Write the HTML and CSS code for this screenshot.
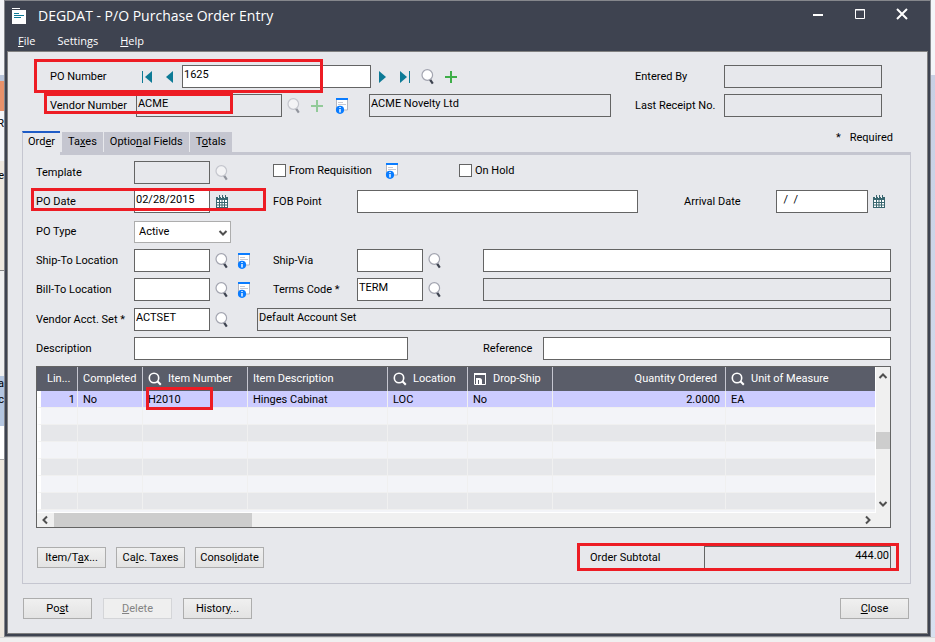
FILE: index.html
```html
<!DOCTYPE html>
<html lang="en">
<head>
    <meta charset="UTF-8">
    <meta name="viewport" content="width=device-width, initial-scale=1.0">
    <title>DEGDAT - P/O Purchase Order Entry</title>
    <link rel="stylesheet" href="styles.css">
</head>
<body>
    <!-- shared icons -->
    <svg class="defs" width="0" height="0" aria-hidden="true">
        <symbol id="i-search" viewBox="0 0 14 16">
            <path d="M8.6 10l3.2 4.6" stroke="#3e4350" stroke-width="2.2" fill="none"/>
            <circle cx="6.3" cy="6" r="5.3" fill="#fff" stroke="#a3a5b0" stroke-width="1.2"/>
        </symbol>
        <symbol id="i-plus" viewBox="0 0 14 14">
            <path d="M6 1v12M0 7h12" stroke="#3fae49" stroke-width="2" fill="none"/>
        </symbol>
        <symbol id="i-doc" viewBox="0 0 14 16">
            <path d="M1.5 2v10h11V2" fill="#fff" stroke="#b4b6c0"/>
            <path d="M1 0h12v2H1z" fill="#0a7cff"/>
            <path d="M3 4.5h5M3 6.5h8" stroke="#c8c9d2" fill="none"/>
            <circle cx="5" cy="11.8" r="4.1" fill="#0a7cff"/>
            <path d="M5 9v1M5 11v3.4" stroke="#fff" stroke-width="1.4" fill="none"/>
        </symbol>
        <symbol id="i-cal" viewBox="0 0 14 14">
            <path d="M1 2h12v11H1z" fill="#39666f"/>
            <path d="M2 5h10v7H2z" fill="#fff"/>
            <path d="M2 7.500h10M2 10h10M4.500 5v7M7 5v7M9.500 5v7" stroke="#39666f" fill="none"/>
            <path d="M4.500 0v2M7.500 0v2M10.500 0v2" stroke="#39666f" fill="none"/>
            <path d="M3 2.500h1M6 2.500h1M9 2.500h1" stroke="#fff" fill="none"/>
        </symbol>
        <symbol id="i-find" viewBox="0 0 14 14">
            <circle cx="6" cy="6" r="4.7" fill="none" stroke="#fff" stroke-width="1.6"/>
            <path d="M9.4 9.2l3.4 3.6" stroke="#fff" stroke-width="2" fill="none"/>
        </symbol>
        <symbol id="i-arrow" viewBox="0 0 10 10">
            <path d="M1.5 3l3.5 3.5L8.5 3" fill="none" stroke="#505050" stroke-width="2"/>
        </symbol>
    </svg>

    <div class="desktop">
        <div class="behind-left" aria-hidden="true">
            <div class="strip strip-top"></div>
            <div class="strip strip-bar"></div>
            <div class="strip strip-orange"></div>
            <div class="strip strip-text">R</div>
            <div class="strip strip-beige">e</div>
            <div class="strip strip-grey"></div>
            <div class="strip strip-blue">a<br>c</div>
            <div class="strip strip-white"></div>
            <div class="strip strip-rest"></div>
        </div>

        <main class="window">
            <header class="titlebar">
                <svg class="app-icon" width="14" height="16" viewBox="0 0 14 16">
                    <path d="M0 2h14v14H0z" fill="#fff"/>
                    <path d="M0 0h8v1H0z" fill="#fff"/>
                    <path d="M2 5.500h5M2 7.500h10M2 9.500h7" stroke="#0d7a96" stroke-width="1.2" fill="none"/>
                </svg>
                <h1>DEGDAT - P/O Purchase Order Entry</h1>
                <div class="window-buttons">
                    <button type="button" aria-label="Minimize"><svg width="12" height="12"><path d="M1 7h10" stroke="#fff" stroke-width="2"/></svg></button>
                    <button type="button" aria-label="Maximize"><svg width="12" height="12"><path d="M1.5 1.5h9v9h-9zM1 2h10" fill="none" stroke="#fff"/></svg></button>
                    <button type="button" aria-label="Close window"><svg width="12" height="12"><path d="M1 1l10 10M11 1L1 11" stroke="#fff" stroke-width="2"/></svg></button>
                </div>
            </header>
            <nav class="menu">
                <button type="button"><u>F</u>ile</button>
                <button type="button">Settings</button>
                <button type="button"><u>H</u>elp</button>
            </nav>

            <form class="client">
                <section class="head">
                    <div class="group">
                        <div class="row marked">
                            <label class="head-label" for="po">PO Number</label>
                            <div class="nav-buttons">
                                <button class="icon" type="button" aria-label="First"><svg width="12" height="12"><path d="M1.5 0v12" stroke="#0d7a96"/><path d="M11 0v12L4 6z" fill="#0d7a96"/></svg></button>
                                <button class="icon" type="button" aria-label="Previous"><svg width="12" height="12"><path d="M9 0v12L2 6z" fill="#0d7a96"/></svg></button>
                            </div>
                            <input class="po" id="po" type="text" value="1625">
                            <div class="next-buttons">
                                <button class="icon" type="button" aria-label="Next"><svg width="12" height="12"><path d="M2 0v12l7-6z" fill="#0d7a96"/></svg></button>
                                <button class="icon" type="button" aria-label="Last"><svg width="12" height="12"><path d="M1 0v12l7-6z" fill="#0d7a96"/><path d="M10.5 0v12" stroke="#0d7a96"/></svg></button>
                                <button class="icon" type="button" aria-label="Find order"><svg width="14" height="16"><use href="#i-search"/></svg></button>
                                <button class="icon" type="button" aria-label="New order"><svg width="14" height="14"><use href="#i-plus"/></svg></button>
                            </div>
                            <span class="mark mark-po"></span>
                        </div>
                        <div class="row marked">
                            <label class="head-label" for="vendor">Vendor Number</label>
                            <input class="vendor" id="vendor" type="text" value="ACME" readonly>
                            <div class="vendor-buttons">
                                <button class="icon" type="button" aria-label="Find vendor" disabled><svg width="14" height="16"><use href="#i-search"/></svg></button>
                                <button class="icon" type="button" aria-label="New vendor" disabled><svg width="14" height="14"><use href="#i-plus"/></svg></button>
                                <button class="icon" type="button" aria-label="Vendor details"><svg width="14" height="16"><use href="#i-doc"/></svg></button>
                            </div>
                            <input class="vendor-name" type="text" value="ACME Novelty Ltd" aria-label="Vendor name" readonly>
                            <span class="mark mark-vendor"></span>
                        </div>
                    </div>
                    <div class="group head-right">
                        <div class="row">
                            <label class="right-label" for="entered">Entered By</label>
                            <input class="right-field" id="entered" type="text" readonly>
                        </div>
                        <div class="row">
                            <label class="right-label" for="receipt">Last Receipt No.</label>
                            <input class="right-field" id="receipt" type="text" readonly>
                        </div>
                    </div>
                </section>

                <div class="tabs">
                    <button class="tab active" type="button">Ord<u>e</u>r</button>
                    <button class="tab" type="button">Ta<u>x</u>es</button>
                    <button class="tab" type="button">Optio<u>n</u>al Fields</button>
                    <button class="tab" type="button">T<u>o</u>tals</button>
                    <span class="required"><span>*</span>Required</span>
                </div>

                <section class="panel">
                    <div class="group">
                        <div class="row">
                            <div class="cell-a">
                                <label for="template">Template</label>
                                <input class="short" id="template" type="text" readonly>
                                <button class="icon" type="button" aria-label="Find template" disabled><svg width="14" height="16"><use href="#i-search"/></svg></button>
                            </div>
                            <div class="checks">
                                <label class="check"><input type="checkbox">From Requisition</label>
                                <button class="icon" type="button" aria-label="Requisition details"><svg width="14" height="16"><use href="#i-doc"/></svg></button>
                                <label class="check hold"><input type="checkbox">On Hold</label>
                            </div>
                        </div>
                        <div class="row marked">
                            <div class="cell-a">
                                <label for="podate">PO Date</label>
                                <input class="short" id="podate" type="text" value="02/28/2015">
                                <button class="icon" type="button" aria-label="Pick PO date"><svg width="14" height="14"><use href="#i-cal"/></svg></button>
                            </div>
                            <label class="label-b" for="fob">FOB Point</label>
                            <input class="fob" id="fob" type="text">
                            <div class="arrival">
                                <label for="arrival">Arrival Date</label>
                                <input id="arrival" type="text" value="  /  /">
                                <button class="icon" type="button" aria-label="Pick arrival date"><svg width="14" height="14"><use href="#i-cal"/></svg></button>
                            </div>
                            <span class="mark mark-date"></span>
                        </div>
                    </div>
                    <div class="group">
                        <div class="row">
                            <div class="cell-a">
                                <label for="potype">PO Type</label>
                                <div class="select">
                                    <select id="potype"><option>Active</option><option>Standing</option><option>Future</option><option>Blanket</option></select>
                                    <svg width="10" height="10"><use href="#i-arrow"/></svg>
                                </div>
                            </div>
                        </div>
                        <div class="row">
                            <div class="cell-a">
                                <label for="shipto">Ship-To Location</label>
                                <input class="short" id="shipto" type="text">
                                <button class="icon" type="button" aria-label="Find ship-to location"><svg width="14" height="16"><use href="#i-search"/></svg></button>
                                <button class="icon" type="button" aria-label="Ship-to details"><svg width="14" height="16"><use href="#i-doc"/></svg></button>
                            </div>
                            <label class="label-b" for="shipvia">Ship-Via</label>
                            <div class="cell-b">
                                <input id="shipvia" type="text">
                                <button class="icon" type="button" aria-label="Find ship-via"><svg width="14" height="16"><use href="#i-search"/></svg></button>
                            </div>
                            <input class="fill" type="text" aria-label="Ship-via description">
                        </div>
                        <div class="row">
                            <div class="cell-a">
                                <label for="billto">Bill-To Location</label>
                                <input class="short" id="billto" type="text">
                                <button class="icon" type="button" aria-label="Find bill-to location"><svg width="14" height="16"><use href="#i-search"/></svg></button>
                                <button class="icon" type="button" aria-label="Bill-to details"><svg width="14" height="16"><use href="#i-doc"/></svg></button>
                            </div>
                            <label class="label-b" for="terms">Terms Code *</label>
                            <div class="cell-b">
                                <input id="terms" type="text" value="TERM">
                                <button class="icon" type="button" aria-label="Find terms code"><svg width="14" height="16"><use href="#i-search"/></svg></button>
                            </div>
                            <input class="fill" type="text" aria-label="Terms description" readonly>
                        </div>
                    </div>
                    <div class="group">
                        <div class="row">
                            <div class="cell-a acct">
                                <label for="acctset">Vendor Acct. Set *</label>
                                <input class="short" id="acctset" type="text" value="ACTSET">
                                <button class="icon" type="button" aria-label="Find account set"><svg width="14" height="16"><use href="#i-search"/></svg></button>
                            </div>
                            <input class="fill" type="text" value="Default Account Set" aria-label="Account set description" readonly>
                        </div>
                        <div class="row">
                            <div class="desc">
                                <label for="desc">Description</label>
                                <input id="desc" type="text">
                            </div>
                            <label class="label-ref" for="ref">Reference</label>
                            <input class="fill" id="ref" type="text">
                        </div>
                    </div>

                    <div class="grid">
                        <div class="table-wrap">
                            <table>
                                <colgroup>
                                    <col class="c-line"><col class="c-completed"><col class="c-item"><col class="c-desc">
                                    <col class="c-location"><col class="c-drop"><col class="c-qty"><col>
                                </colgroup>
                                <thead>
                                    <tr>
                                        <th class="line">Lin...</th>
                                        <th>Completed</th>
                                        <th><svg width="14" height="14"><use href="#i-find"/></svg>Item Number</th>
                                        <th>Item Description</th>
                                        <th><svg width="14" height="14"><use href="#i-find"/></svg>Location</th>
                                        <th><svg width="14" height="14" viewBox="0 0 14 14"><path d="M1.5 3v9.5h11V3" fill="none" stroke="#fff"/><path d="M1 1h12v2H1z" fill="#fff"/><path d="M3 6h3.5a2.500 2.500 0 0 1 2.500 2.500V13H3z" fill="#fff"/><path d="M5.5 8v4" stroke="#5a5d69"/></svg>Drop-Ship</th>
                                        <th class="num">Quantity Ordered</th>
                                        <th><svg width="14" height="14"><use href="#i-find"/></svg>Unit of Measure</th>
                                    </tr>
                                </thead>
                                <tbody>
                                    <tr class="selected">
                                        <td class="num">1</td>
                                        <td>No</td>
                                        <td class="marked">H2010<span class="mark mark-item"></span></td>
                                        <td>Hinges Cabinat</td>
                                        <td>LOC</td>
                                        <td>No</td>
                                        <td class="num">2.0000</td>
                                        <td>EA</td>
                                    </tr>
                                    <tr><td></td><td></td><td></td><td></td><td></td><td></td><td></td><td></td></tr>
                                    <tr><td></td><td></td><td></td><td></td><td></td><td></td><td></td><td></td></tr>
                                    <tr><td></td><td></td><td></td><td></td><td></td><td></td><td></td><td></td></tr>
                                    <tr><td></td><td></td><td></td><td></td><td></td><td></td><td></td><td></td></tr>
                                    <tr><td></td><td></td><td></td><td></td><td></td><td></td><td></td><td></td></tr>
                                    <tr><td></td><td></td><td></td><td></td><td></td><td></td><td></td><td></td></tr>
                                </tbody>
                            </table>
                        </div>
                        <div class="vscroll">
                            <svg class="up" width="10" height="10"><use href="#i-arrow"/></svg>
                            <div class="thumb"></div>
                            <svg width="10" height="10"><use href="#i-arrow"/></svg>
                        </div>
                        <div class="hscroll">
                            <svg class="left" width="10" height="10"><use href="#i-arrow"/></svg>
                            <div class="thumb"></div>
                            <svg class="right" width="10" height="10"><use href="#i-arrow"/></svg>
                        </div>
                    </div>

                    <div class="panel-foot marked">
                        <button class="btn" type="button">Item/T<u>a</u>x...</button>
                        <button class="btn" type="button">Ca<u>l</u>c. Taxes</button>
                        <button class="btn" type="button">Consol<u>i</u>date</button>
                        <label for="subtotal">Order Subtotal</label>
                        <input id="subtotal" type="text" value="444.00" readonly>
                        <span class="mark mark-total"></span>
                    </div>
                </section>

                <footer class="actions">
                    <button class="btn" type="button">Po<u>s</u>t</button>
                    <button class="btn" type="button" disabled><u>D</u>elete</button>
                    <button class="btn" type="button">Histor<u>y</u>...</button>
                    <button class="btn close" type="button"><u>C</u>lose</button>
                </footer>
            </form>
        </main>

        <div class="behind-right" aria-hidden="true"></div>
    </div>
</body>
</html>
```
FILE: styles.css
```css
* {
    box-sizing: border-box;
}
body {
    margin: 0;
    background-color: #f0f0f0;
    color: #000;
    font-family: Roboto, sans-serif;
    font-size: 11px;
    line-height: 16px;
}
button, input, select {
    font: inherit;
    color: inherit;
    margin: 0;
}
label {
    white-space: nowrap;
}
.defs {
    position: absolute;
}
u {
    text-underline-offset: 1px;
}

/* desktop behind the window */
.desktop {
    display: grid;
    grid-template-columns: 4px minmax(0, 1fr) 4px;
    border-bottom: 1px solid #d8d8d8;
}
.behind-left {
    display: flex;
    flex-direction: column;
    overflow: hidden;
    background-color: #eee8df;
}
.strip {
    overflow: hidden;
    direction: rtl;
}
.strip-top {
    height: 75px;
    background-color: #f4f5f8;
}
.strip-bar {
    height: 6px;
    background-color: #b9c5da;
}
.strip-orange {
    height: 30px;
    background-color: #e8916a;
}
.strip-text {
    height: 50px;
    padding-top: 5px;
    background-color: #f4f5f8;
}
.strip-beige {
    height: 109px;
    padding-top: 7px;
}
.strip-grey {
    height: 106px;
    border-top: 1px solid #888;
    background-color: #f0f0f0;
}
.strip-blue {
    height: 50px;
    background-color: #b4c6e0;
}
.strip-white {
    height: 34px;
    background-color: #fff;
    border-bottom: 1px solid #aaa;
}
.strip-rest {
    flex: 1;
}
.behind-right {
    background: linear-gradient(#f4f5f9 75px, #c8d0e4 75px, #d8e1f0);
}

/* window frame */
.window {
    border: 1px solid #85878c;
    background-color: #3e4350;
    padding: 0 2px 2px;
}
.titlebar {
    display: flex;
    align-items: center;
    height: 30px;
    padding: 0 5px;
    color: #fff;
}
.titlebar h1 {
    flex: 1;
    margin: 0 0 0 12px;
    font-family: "Open Sans", sans-serif;
    font-size: 14px;
    font-weight: normal;
}
.window-buttons {
    display: flex;
    padding-bottom: 5px;
}
.window-buttons button {
    display: flex;
    justify-content: center;
    width: 42px;
    padding: 0;
    border: none;
    background: none;
}
.menu {
    display: flex;
    gap: 22px;
    height: 20px;
    padding: 0 11px;
}
.menu button {
    padding: 0;
    border: none;
    background: none;
    color: #fff;
    font-family: "Open Sans", sans-serif;
    font-size: 11px;
}
.client {
    border: 1px solid #808080;
    background-color: #e7e8ec;
    padding: 13px 16px 14px 14px;
}

/* rows and fields */
.group {
    display: flex;
    flex-direction: column;
    gap: 6px;
}
.row {
    display: flex;
    align-items: center;
    height: 23px;
}
.marked {
    position: relative;
}
input[type="text"] {
    height: 23px;
    min-width: 0;
    padding: 0 1px 5px;
    border: 1px solid #646464;
    border-radius: 0;
    background-color: #fff;
}
input[type="text"]:read-only {
    background-color: #e7e8ec;
}
.icon {
    display: flex;
    padding: 0;
    border: none;
    background: none;
}
.icon:disabled {
    opacity: 0.5;
}

/* top section */
.head {
    display: flex;
    justify-content: space-between;
    padding: 0 29px 0 28px;
}
.head-label {
    width: 86px;
}
.nav-buttons {
    display: flex;
    gap: 11px;
    width: 46px;
    padding-left: 5px;
}
.po {
    width: 189px;
}
.next-buttons {
    display: flex;
    align-items: center;
    gap: 10px;
    padding-left: 6px;
}
.vendor {
    width: 146px;
}
.vendor-buttons {
    display: flex;
    align-items: center;
    justify-content: space-between;
    width: 87px;
    padding: 0 20px 0 5px;
}
.vendor-name {
    width: 242px;
}
.right-label {
    width: 89px;
}
.right-field {
    width: 158px;
}

/* tabs */
.tabs {
    display: flex;
    align-items: flex-end;
    height: 38px;
    border-bottom: 3px solid #c5c6d0;
}
.tab {
    height: 20px;
    margin-right: 1px;
    padding: 0 6px;
    border: none;
    background-color: #c5c6d0;
}
.tab.active {
    height: 24px;
    margin: 0 2px -3px 0;
    padding: 0 5px 4px;
    border-top: 2px solid #1e5bc6;
    border-left: 1px solid #c5c6d0;
    background-color: #e7e8ec;
}
.required {
    display: flex;
    gap: 9px;
    margin-left: auto;
    padding: 0 18px 6px 0;
}
.panel {
    display: flex;
    flex-direction: column;
    gap: 7px;
    padding: 6px 19px 14px 13px;
    border: 1px solid #c5c6d0;
    border-top: none;
}
.cell-a {
    display: flex;
    align-items: center;
    gap: 5px;
    width: 237px;
}
.cell-a label {
    width: 93px;
}
.cell-a .icon + .icon {
    margin-left: 3px;
}
.short {
    width: 76px;
}
.acct {
    width: 221px;
}
.label-b {
    width: 84px;
}
.cell-b {
    display: flex;
    align-items: center;
    gap: 5px;
    width: 126px;
}
.cell-b input {
    width: 66px;
}
.fill {
    flex: 1;
}
.fob {
    width: 281px;
}
.arrival {
    display: flex;
    align-items: center;
    margin-left: auto;
    padding-right: 5px;
}
.arrival label {
    width: 92px;
}
.arrival input {
    width: 92px;
    margin-right: 4px;
    white-space: pre;
}
.desc {
    display: flex;
    align-items: center;
    width: 447px;
}
.desc label {
    width: 98px;
}
.desc input {
    width: 274px;
}
.label-ref {
    width: 60px;
}
.checks {
    display: flex;
    align-items: center;
    align-self: flex-start;
    height: 19px;
}
.check {
    display: flex;
    align-items: center;
    gap: 3px;
    width: 112px;
}
.check.hold {
    margin-left: 60px;
}
.check input {
    appearance: none;
    width: 13px;
    height: 13px;
    border: 1px solid #646464;
    background-color: #fff;
}
.check input:checked {
    background-color: #0a7cff;
}
.select {
    position: relative;
    width: 97px;
}
.select select {
    appearance: none;
    display: block;
    width: 100%;
    height: 22px;
    padding: 0 20px 0 4px;
    border: 1px solid #adadad;
    border-radius: 0;
    background-color: #fff;
}
.select svg {
    position: absolute;
    top: 7px;
    right: 3px;
    pointer-events: none;
}

/* detail lines */
.grid {
    display: grid;
    grid-template-columns: minmax(0, 1fr) 14px;
    margin-top: -1px;
    border: 1px solid #646464;
    background-color: #f0f0f0;
}
.table-wrap {
    padding-bottom: 2px;
    border-right: 1px solid #fff;
    border-bottom: 1px solid #fff;
    background-color: #f3f4f8;
}
table {
    width: 100%;
    table-layout: fixed;
    border-spacing: 0;
}
.c-line {
    width: 41px;
}
.c-completed {
    width: 65px;
}
.c-item {
    width: 105px;
}
.c-desc {
    width: 140px;
}
.c-location {
    width: 80px;
}
.c-drop {
    width: 85px;
}
.c-qty {
    width: 173px;
}
th {
    height: 24px;
    padding: 0 5px;
    border-right: 1px solid #c5c6d0;
    background-color: #5a5d69;
    color: #fff;
    font-weight: normal;
    text-align: left;
    white-space: nowrap;
}
th svg {
    margin-right: 6px;
    vertical-align: middle;
}
th.line {
    padding-left: 10px;
}
th.num {
    padding-right: 8px;
}
td {
    height: 17px;
    padding: 1px 5px 0;
    border-right: 1px solid #f0f0f0;
    border-bottom: 1px solid #f0f0f0;
    background-color: #f3f4f8;
    line-height: 15px;
    white-space: nowrap;
}
td:first-child {
    border-left: 4px solid #fff;
    padding-right: 2px;
}
th:last-child, td:last-child {
    border-right: none;
}
tr:nth-child(odd) td {
    background-color: #e6e7ea;
}
tr.selected td {
    background-color: #ccccff;
}
.num {
    text-align: right;
}
.vscroll {
    display: flex;
    flex-direction: column;
    align-items: center;
    justify-content: space-between;
    padding: 4px 0;
}
.vscroll .thumb {
    width: 14px;
    height: 17px;
    background-color: #cdcdcd;
}
.hscroll {
    display: flex;
    align-items: center;
    height: 14px;
    padding: 0 3px;
}
.hscroll .thumb {
    width: 198px;
    height: 14px;
    margin-left: 4px;
    background-color: #cdcdcd;
}
.up {
    transform: rotate(180deg);
}
.left {
    transform: rotate(90deg);
}
.right {
    margin-left: auto;
    transform: rotate(-90deg);
}

/* buttons */
.btn {
    width: 69px;
    height: 21px;
    padding: 0;
    border: 1px solid #adadad;
    background: linear-gradient(#f0f0f0, #e3e3e3);
}
.btn:disabled {
    border-color: #d4d5d8;
    background: #efefef;
    color: #838383;
}
.panel-foot {
    display: flex;
    align-items: center;
    gap: 10px;
    margin-top: 11px;
    padding-left: 1px;
}
.panel-foot label {
    width: 104px;
    margin-left: auto;
}
.panel-foot input {
    width: 187px;
    text-align: right;
}
.actions {
    display: flex;
    gap: 11px;
    padding: 14px 2px 0 1px;
}
.actions .close {
    margin-left: auto;
}

/* red highlight boxes */
.mark {
    position: absolute;
    border: 3px solid #ed1c24;
    pointer-events: none;
}
.mark-po {
    top: -6px;
    left: -16px;
    width: 289px;
    height: 34px;
}
.mark-vendor {
    top: -1px;
    left: -6px;
    width: 189px;
    height: 21px;
}
.mark-date {
    top: -2px;
    left: -5px;
    width: 235px;
    height: 23px;
}
.mark-item {
    top: -4px;
    left: 3px;
    width: 67px;
    height: 23px;
}
.mark-total {
    top: -3px;
    right: -8px;
    width: 322px;
    height: 28px;
}
```
